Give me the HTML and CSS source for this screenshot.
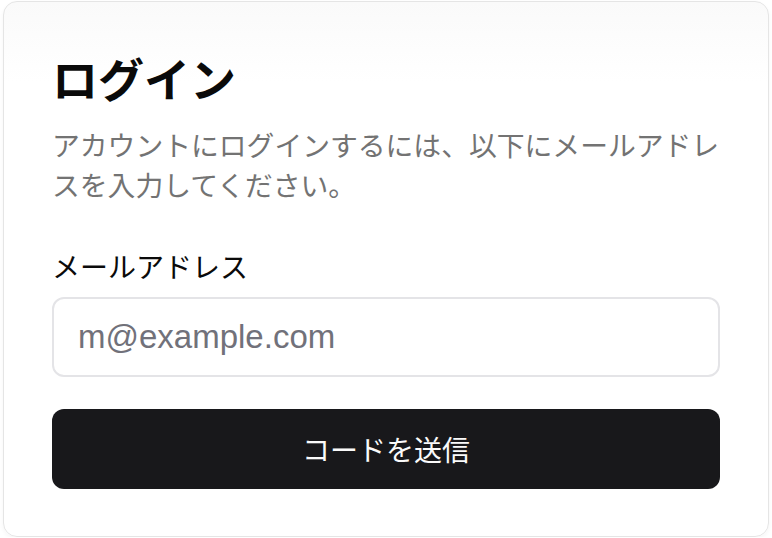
FILE: index.html
```html
<!DOCTYPE html>
<html lang="ja">
<head>
  <meta charset="UTF-8" />
  <meta name="viewport" content="width=device-width, initial-scale=1.0"/>
  <title>ログイン</title>
  <link rel="stylesheet" href="styles.css">
</head>
<body>
  <div class="card">
    <div class="card-header">
      <h1 class="card-title">ログイン</h1>
      <p class="card-desc">アカウントにログインするには、以下にメールアドレスを入力してください。</p>
    </div>

    <form class="card-content" onsubmit="return false;">
      <div class="field">
        <label for="email">メールアドレス</label>
        <input type="email" id="email" placeholder="m@example.com" />
      </div>
      <button type="submit" class="submit-btn">コードを送信</button>
    </form>
  </div>
</body>
</html>
```

FILE: styles.css
```css
body {
  font-family: "Noto Sans CJK JP", "Liberation Sans", sans-serif;
  background-color: #fff;
  color: #0a0a0a;
  margin: 0;
}

.card {
  box-sizing: border-box;
  width: 766px;
  margin: 1px 0 0 3px;
  padding: 48px 48px 47px;
  border: 1px solid #e5e5e5;
  border-radius: 14px;
  background: linear-gradient(180deg, #fafafa 0, #fff 80px);
  box-shadow: 0 2px 4px rgba(0, 0, 0, 0.04);
}

.card-header {
  display: flex;
  flex-direction: column;
  gap: 12px;
  padding-bottom: 48px;
}

.card-title {
  margin: 0 0 8px;
  font-size: 46px;
  font-weight: bold;
  line-height: 54px;
  color: #0a0a0a;
}

.card-desc {
  margin: 0;
  font-size: 27.8px;
  line-height: 40px;
  color: #737373;
}

.card-content {
  display: flex;
  flex-direction: column;
  gap: 32px;
}

.field {
  display: flex;
  flex-direction: column;
  gap: 17px;
}

.field label {
  font-size: 28px;
  line-height: 28px;
  color: #0a0a0a;
}

.field input {
  box-sizing: border-box;
  height: 80px;
  padding: 0 24px;
  border: 2px solid #e4e4e7;
  border-radius: 12px;
  font-family: "Liberation Sans", sans-serif;
  font-size: 33px;
  color: #0a0a0a;
  outline: none;
}

.field input::placeholder {
  color: #71717a;
}

.submit-btn {
  height: 80px;
  border: none;
  border-radius: 12px;
  background-color: #18181b;
  color: #fafafa;
  font-family: "Noto Sans CJK JP", sans-serif;
  font-size: 28px;
  cursor: pointer;
}
```
